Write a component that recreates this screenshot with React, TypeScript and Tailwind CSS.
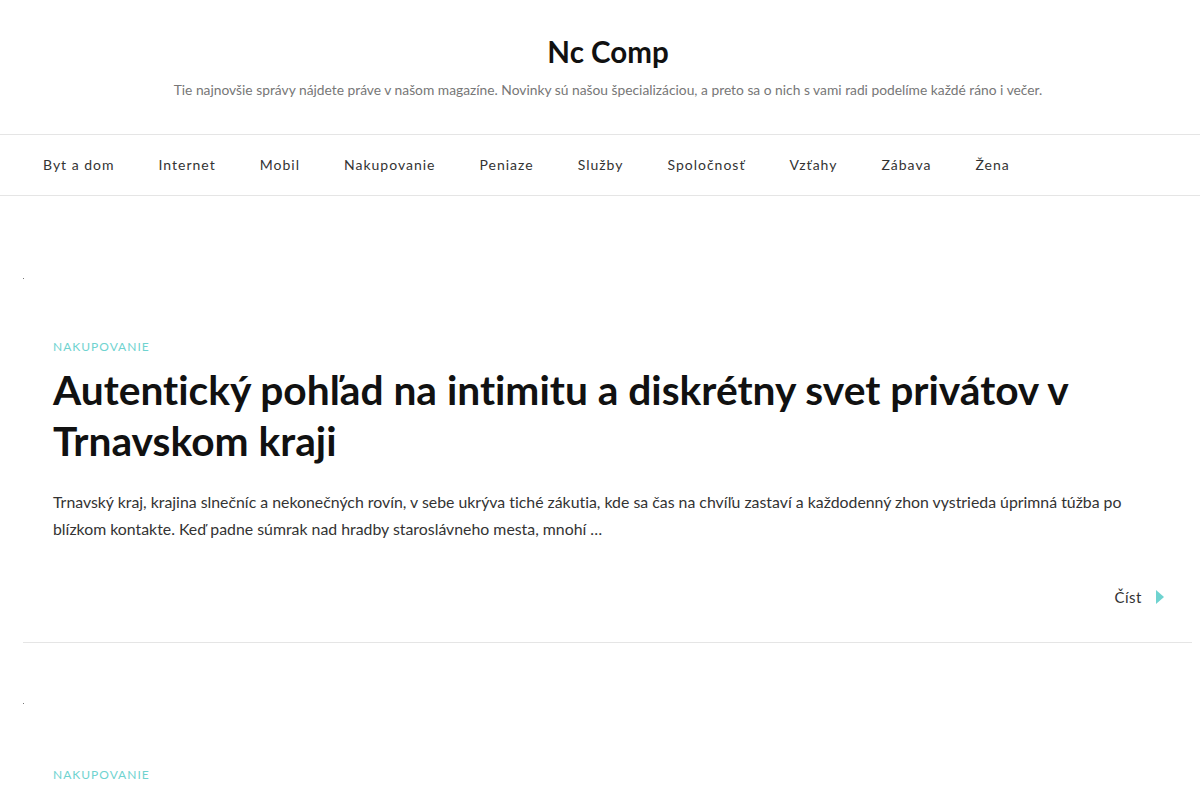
const navItems = ['Byt a dom', 'Internet', 'Mobil', 'Nakupovanie', 'Peniaze', 'Služby', 'Spoločnosť', 'Vzťahy', 'Zábava', 'Žena']

const posts = [
  {
    cat: 'Nakupovanie',
    title: 'Autentický pohľad na intimitu a diskrétny svet privátov v Trnavskom kraji',
    excerpt:
      'Trnavský kraj, krajina slnečníc a nekonečných rovín, v sebe ukrýva tiché zákutia, kde sa čas na chvíľu zastaví a každodenný zhon vystrieda úprimná túžba po blízkom kontakte. Keď padne súmrak nad hradby staroslávneho mesta, mnohí …',
  },
  {
    cat: 'Nakupovanie',
    title: 'Ako si vybrať správne oblečenie na každú príležitosť',
    excerpt: 'Nakupovanie nemusí byť stresujúce, ak viete, čo hľadáte.',
  },
]

export default function App() {
  return (
    <div
      className="min-h-screen bg-white text-[#333] [font-variant-ligatures:none]"
      style={{ fontFamily: 'Lato, "Open Sans", sans-serif' }}
    >
      <header className="pt-[33px] pb-[33px] pl-[16px] text-center">
        <h1 className="text-[29.5px] font-bold leading-[38px] text-[#111]">Nc Comp</h1>
        <p className="mt-[9px] pb-[1px] text-[13.8px] leading-[20px] text-[#777]">
          Tie najnovšie správy nájdete práve v našom magazíne. Novinky sú našou špecializáciou, a preto sa o nich s vami radi podelíme každé ráno i večer.
        </p>
      </header>

      <nav className="border-y border-[#e5e5e5]">
        <ul className="flex h-[60px] items-center gap-[44px] pl-[43px] pb-[2px]">
          {navItems.map(n => (
            <li key={n} className="text-[14px] tracking-[1px] text-[#333]">{n}</li>
          ))}
        </ul>
      </nav>

      <main className="pl-[23px] pr-[8px] pt-[82px]">
        {posts.map((p, i) => (
          <article key={i} className={i === 0 ? 'border-b border-[#e5e5e5] pb-[33px]' : 'pt-[60px]'}>
            <div className="h-px w-px bg-[#777]" />
            <div className="px-[30px]">
              <p className={`${i === 0 ? 'mt-[61px]' : 'mt-[64px]'} text-[12px] uppercase leading-[14px] tracking-[1px] text-[#6fd3d0]`}>{p.cat}</p>
              <h2 className="mt-[10px] text-[40.7px] font-bold leading-[51px] text-[#111]">{p.title}</h2>
              <p className="mt-[22px] text-[15.85px] leading-[27px] text-[#333]">{p.excerpt}</p>
              <div className="mt-[44px] flex items-center justify-end gap-[14px] pr-0">
                <span className="text-[15px] tracking-[0.5px] text-[#333]">Číst</span>
                <svg width="8" height="14" viewBox="0 0 8 14" className="-mr-[2px]"><path d="M0 0 L8 7 L0 14 Z" fill="#6fd3d0" /></svg>
              </div>
            </div>
          </article>
        ))}
      </main>
    </div>
  )
}
